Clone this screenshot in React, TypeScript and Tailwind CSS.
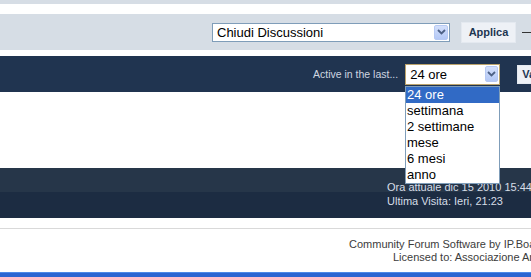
import React from "react";

function Chevron() {
  return (
    <svg width="9" height="6" viewBox="0 0 9 6">
      <path d="M1 1 L4.5 4.5 L8 1" fill="none" stroke="#4d6185" strokeWidth="1.8" />
    </svg>
  );
}

function ArrowBox({ w, h }: { w: string; h: string }) {
  return (
    <div
      className={`${w} ${h} shrink-0 flex items-center justify-center rounded-[2px] border border-[#b6c9f3] bg-[linear-gradient(to_bottom,#d4e0fb,#b3c8f6)]`}
    >
      <Chevron />
    </div>
  );
}

export default function App() {
  const items = ["24 ore", "settimana", "2 settimane", "mese", "6 mesi", "anno"];
  return (
    <div
      className="relative w-[531px] h-[277px] overflow-hidden bg-white"
      style={{ fontFamily: '"Liberation Sans", Arial, sans-serif' }}
    >
      <div className="h-[4px] bg-[#d6dde5]" />
      <div className="h-[10px] bg-white" />
      {/* moderation bar */}
      <div className="h-[36px] bg-[#d6dde5] flex items-center pl-[212px]">
        <div className="w-[238px] h-[19px] shrink-0 border border-[#7f9db9] bg-white flex items-center justify-between pl-[4px] pr-[1px]">
          <span className="text-[13px] leading-none text-black whitespace-nowrap">Chiudi Discussioni</span>
          <ArrowBox w="w-[14px]" h="h-[15px]" />
        </div>
        <div className="ml-[11px] w-[55px] h-[21px] shrink-0 flex items-center justify-center bg-[#eef1f6] border border-[#e4e9f0]">
          <span className="text-[11px] font-bold text-[#1d3652] leading-none">Applica</span>
        </div>
        <div className="ml-[6px] w-[12px] h-px shrink-0 bg-[#333]" />
      </div>
      <div className="h-[6px] bg-white" />
      {/* active users bar */}
      <div className="h-[36px] bg-[#203450] flex items-center pl-[313px] whitespace-nowrap">
        <span className="shrink-0 text-[10.5px] text-[#cfd6e0] leading-none">Active in the last...</span>
        <div className="ml-[7px] w-[95px] h-[21px] shrink-0 border border-[#bba36c] bg-white flex items-center justify-between pl-[4px] pr-[1px]">
          <span className="text-[13px] leading-none text-black">24 ore</span>
          <ArrowBox w="w-[13px]" h="h-[16px]" />
        </div>
        <div className="ml-[17px] w-[34px] h-[19px] shrink-0 flex items-center pl-[4px] bg-[#eef1f6] border border-[#e4e9f0]">
          <span className="text-[11px] font-bold text-[#1d3652] leading-none">Vai</span>
        </div>
      </div>
      <div className="h-[76px] bg-white" />
      {/* stats bar */}
      <div className="h-[50px] bg-[linear-gradient(to_bottom,#263649_0px,#263649_24px,#1c2c42_24px,#1c2c42_50px)] pt-[12px] pl-[387px] whitespace-nowrap">
        <div className="text-[11px] leading-[14px] text-[#d6dde7]">Ora attuale dic 15 2010 15:44</div>
        <div className="text-[11px] leading-[14px] text-[#d6dde7]">Ultima Visita: Ieri, 21:23</div>
      </div>
      <div className="h-[10px] bg-white" />
      <div className="h-px bg-[#d9d9d9]" />
      <div className="h-[43px] pt-[9px] whitespace-nowrap">
        <div className="pl-[349px] text-[11px] leading-[13px] text-[#3c3c3c]">Community Forum Software by IP.Board</div>
        <div className="pl-[393px] text-[11px] leading-[13px] text-[#3c3c3c]">Licensed to: Associazione Artistica</div>
      </div>
      <div className="h-[5px] border-t border-[#4d8ae8] bg-[#2c66d2]" />

      {/* open dropdown list */}
      <div className="absolute left-[405px] top-[86px] w-[95px] border border-[#7f9db9] bg-white">
        {items.map((it, i) => (
          <div
            key={it}
            className={
              i === 0
                ? "h-[16px] pl-[1px] text-[13px] leading-[16px] bg-[#316ac5] text-white whitespace-nowrap"
                : "h-[16px] pl-[1px] text-[13px] leading-[16px] text-black whitespace-nowrap"
            }
          >
            {it}
          </div>
        ))}
      </div>
    </div>
  );
}
